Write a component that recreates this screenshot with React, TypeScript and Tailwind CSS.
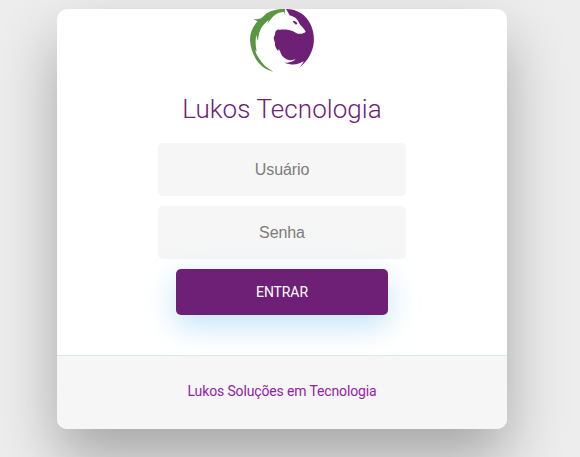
function WolfLogo() {
  return (
    <svg className="h-16 w-16" viewBox="24 27 192 192" aria-label="Lukos">
      <path
        fill="#5a9641"
        d="M129 27 C110 26 91 30 77 38 C70 42 66 48 61 52 C53 58 44 59 35 57 C39 61 43 63 47 64 C32 80 24 98 24 119 C25 141 32 163 45 182 C57 198 73 210 94 215 C74 205 59 190 49 172 C44 164 41 158 40 149 L44 154 C40 137 40 119 43 104 C44 110 45 116 48 122 C49 106 52 94 58 84 C63 75 72 67 80 60 L76 73 C84 58 97 43 111 38 C116 37 121 37 126 36 L128 45 Z"
      />
      <path
        fill="#6d2076"
        d="M132 27 C166 27 194 45 207 76 C218 102 219 132 208 156 C199 177 187 193 168 205 C176 199 182 192 185 184 C168 195 149 196 127 188 C141 189 153 186 161 178 C149 182 139 181 131 176 C122 171 116 163 114 153 L110 147 C109 149 109 151 109 154 C100 144 98 135 99 128 L95 116 C95 112 97 107 99 104 L100 96 C103 90 108 87 112 90 C120 88 131 89 140 90 C150 91 154 95 161 98 C171 104 184 102 191 95 C188 89 184 83 177 77 C171 70 169 61 163 56 C158 51 151 49 143 46 C140 40 136 33 132 27 Z"
      />
      <path fill="#6d2076" d="M152 62 C158 62 163 65 166 70 L163 74 C159 72 154 68 152 62 Z" />
    </svg>
  );
}

const inputClass =
  "block h-[53px] w-[248px] rounded-[5px] bg-[#f6f6f6] text-center font-['Liberation_Sans',Arial,sans-serif] text-base tracking-[-0.1px] text-[#0d0d0d] outline-none placeholder:text-[#7c7c7c]";

export default function App() {
  return (
    <main className="flex h-[457px] w-full overflow-hidden bg-[#ededed] pt-[9px] pl-[57px] font-['Roboto',sans-serif]">
      <section className="flex h-[420px] w-[450px] shrink-0 flex-col overflow-hidden rounded-[10px] bg-white shadow-[0_30px_60px_0_rgba(0,0,0,0.3)]">
        <form className="flex flex-1 flex-col items-center" onSubmit={(e) => e.preventDefault()}>
          <WolfLogo />
          <h1 className="mt-[18px] mb-4 text-[26px] leading-9 font-light tracking-[0.08px] whitespace-nowrap text-[#6d2076]">
            Lukos Tecnologia
          </h1>
          <input className={inputClass} type="text" placeholder="Usuário" />
          <input className={`${inputClass} mt-2.5`} type="password" placeholder="Senha" />
          <button
            className="mt-2.5 h-[46px] w-[212px] rounded-[5px] bg-[#6d2076] text-sm tracking-[-0.1px] text-white uppercase shadow-[0_10px_30px_0_rgba(95,186,233,0.4)]"
            type="submit"
          >
            Entrar
          </button>
        </form>
        <footer className="flex h-[74px] items-center justify-center border-t border-[#dce8f1] bg-[#f6f6f6] pb-1">
          <a className="text-sm tracking-[-0.14px] text-[#9421a6]" href="#">
            Lukos Soluções em Tecnologia
          </a>
        </footer>
      </section>
    </main>
  );
}
